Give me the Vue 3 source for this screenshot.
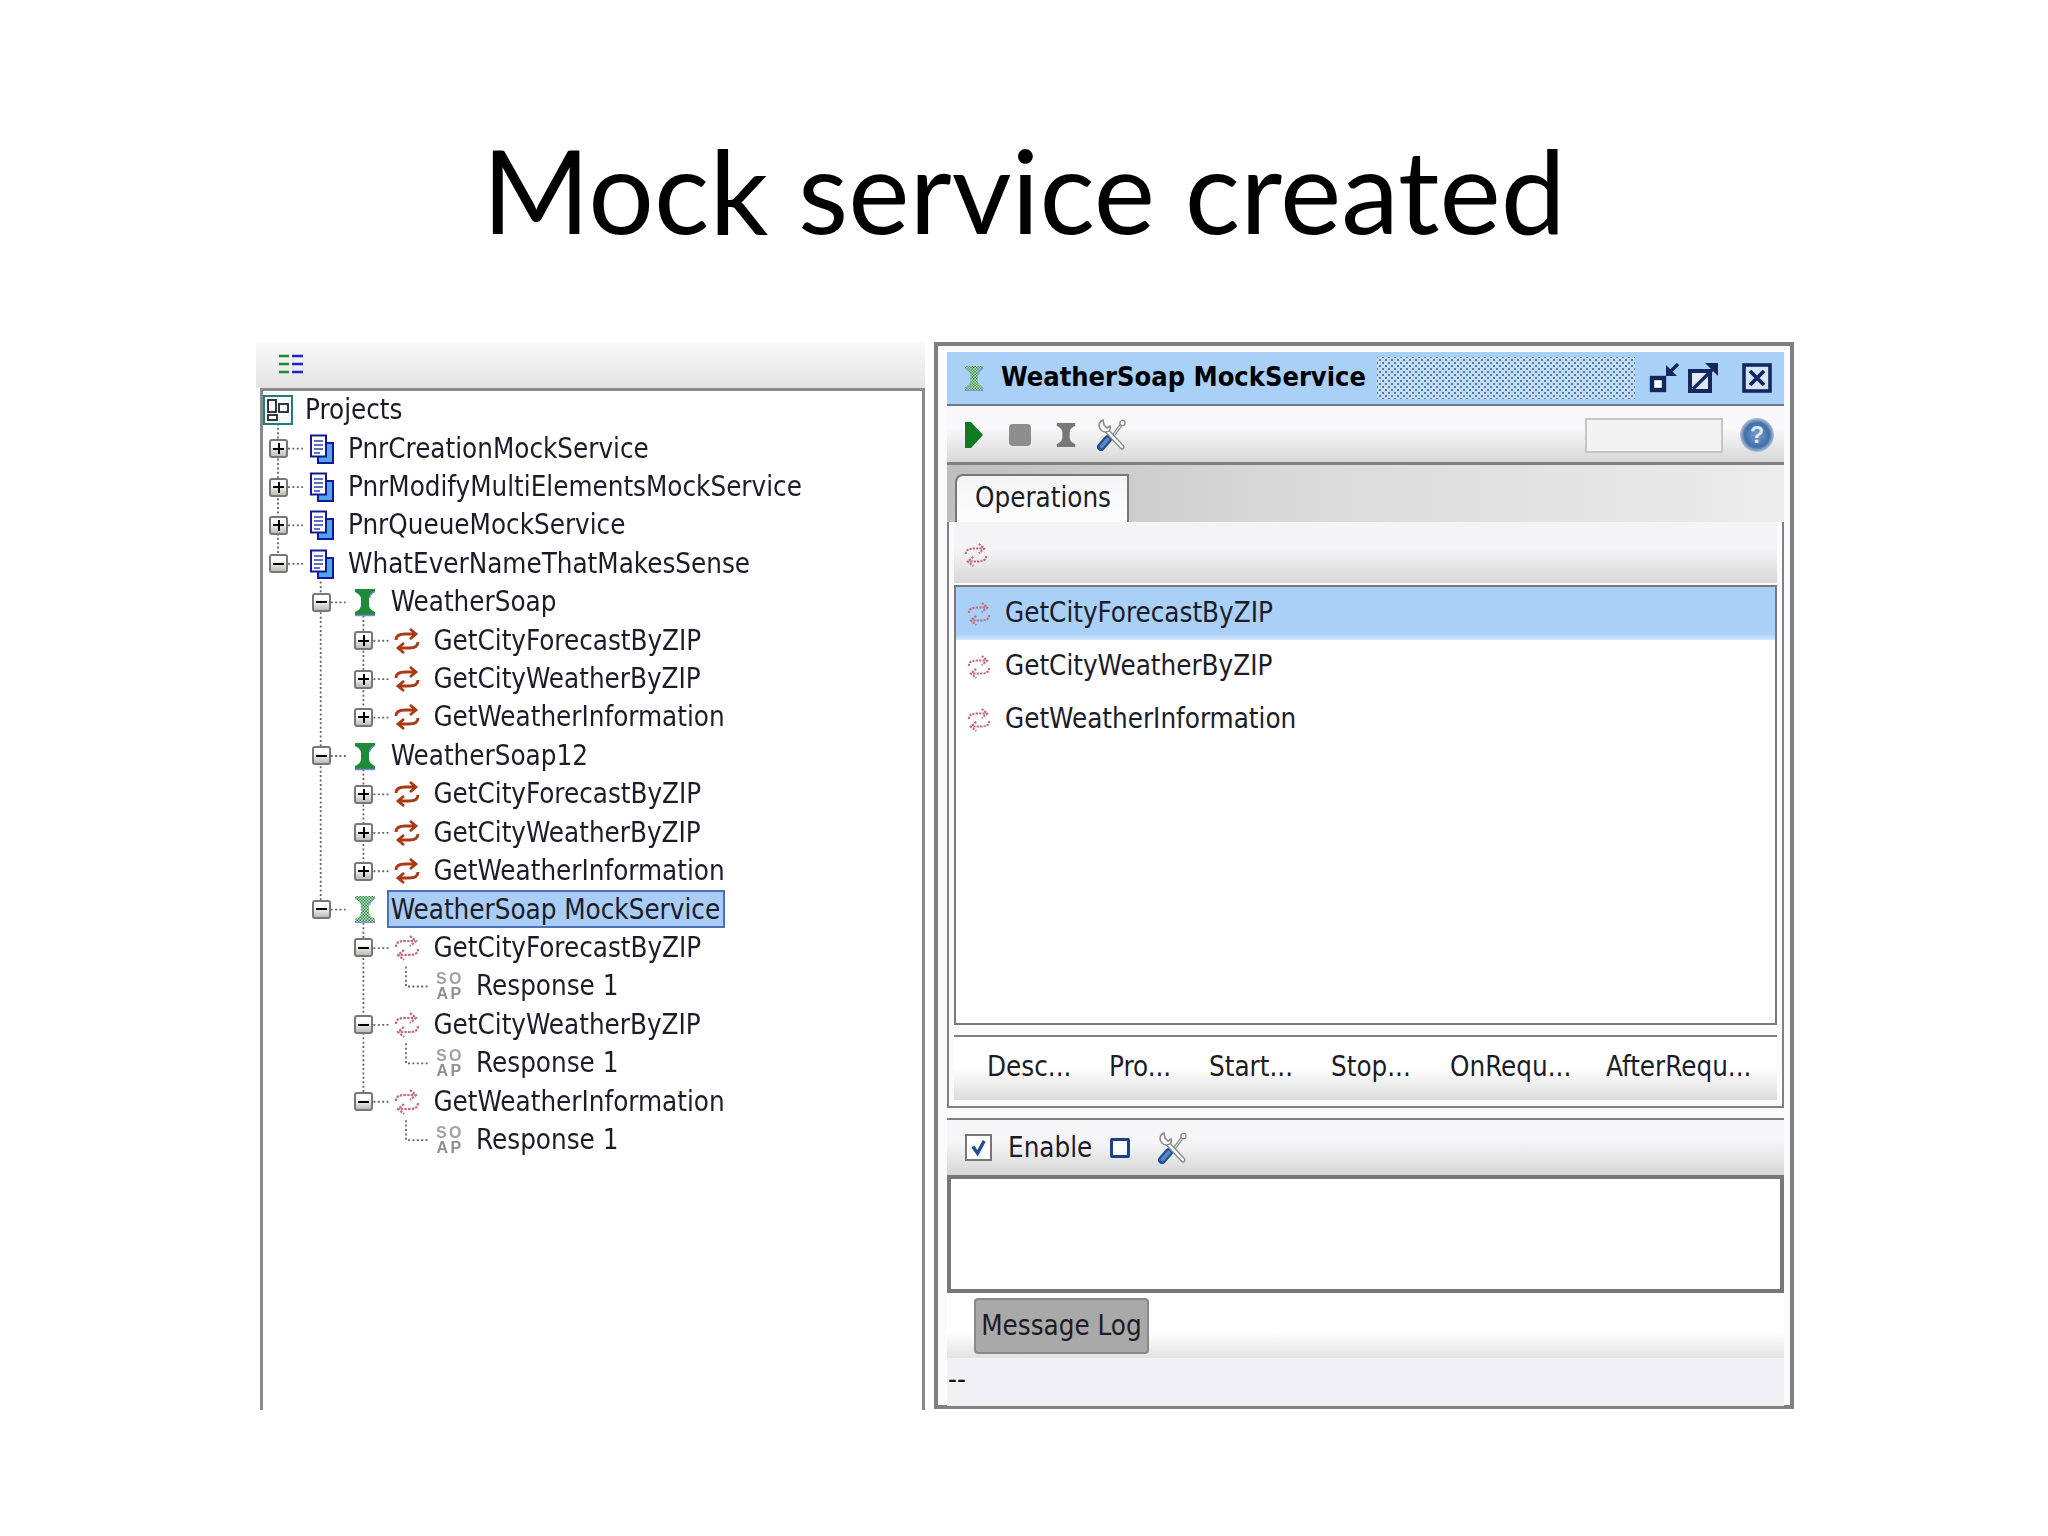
<script setup>
const ROW = 38.42
const rows = [
  { label: 'Projects', icon: 'projects', depth: 0, root: true },
  { label: 'PnrCreationMockService', icon: 'doc', depth: 0, exp: 'plus' },
  { label: 'PnrModifyMultiElementsMockService', icon: 'doc', depth: 0, exp: 'plus' },
  { label: 'PnrQueueMockService', icon: 'doc', depth: 0, exp: 'plus' },
  { label: 'WhatEverNameThatMakesSense', icon: 'doc', depth: 0, exp: 'minus' },
  { label: 'WeatherSoap', icon: 'glass', depth: 1, exp: 'minus' },
  { label: 'GetCityForecastByZIP', icon: 'op', depth: 2, exp: 'plus' },
  { label: 'GetCityWeatherByZIP', icon: 'op', depth: 2, exp: 'plus' },
  { label: 'GetWeatherInformation', icon: 'op', depth: 2, exp: 'plus' },
  { label: 'WeatherSoap12', icon: 'glass', depth: 1, exp: 'minus' },
  { label: 'GetCityForecastByZIP', icon: 'op', depth: 2, exp: 'plus' },
  { label: 'GetCityWeatherByZIP', icon: 'op', depth: 2, exp: 'plus' },
  { label: 'GetWeatherInformation', icon: 'op', depth: 2, exp: 'plus' },
  { label: 'WeatherSoap MockService', icon: 'glass-mock', depth: 1, exp: 'minus', selected: true },
  { label: 'GetCityForecastByZIP', icon: 'op-mock', depth: 2, exp: 'minus' },
  { label: 'Response 1', icon: 'soap', depth: 3 },
  { label: 'GetCityWeatherByZIP', icon: 'op-mock', depth: 2, exp: 'minus' },
  { label: 'Response 1', icon: 'soap', depth: 3 },
  { label: 'GetWeatherInformation', icon: 'op-mock', depth: 2, exp: 'minus' },
  { label: 'Response 1', icon: 'soap', depth: 3 }
]
const cy = (i) => ROW * i + ROW / 2
const cx = (d) => 15 + 42.7 * d
const lines = []
const v = (d, a, b) => lines.push(`M${cx(d)} ${cy(a)}V${cy(b)}`)
v(0, 0, 4); v(1, 4, 13); v(2, 5, 8); v(2, 9, 12); v(2, 13, 18)
rows.forEach((r, i) => {
  if (r.exp) lines.push(`M${cx(r.depth) + 10} ${cy(i)}H${cx(r.depth) + 25}`)
  if (r.icon === 'soap') lines.push(`M143 ${cy(i) - 20}V${cy(i)}H167`)
})
const linePath = lines.join('')
const ops = ['GetCityForecastByZIP', 'GetCityWeatherByZIP', 'GetWeatherInformation']
const tabs = [
  { t: 'Desc...', w: 122 }, { t: 'Pro...', w: 100 }, { t: 'Start...', w: 122 },
  { t: 'Stop...', w: 119 }, { t: 'OnRequ...', w: 156 }, { t: 'AfterRequ...', w: 160 }
]
</script>

<template>
  <div class="slide">
    <svg class="defs" aria-hidden="true">
      <defs>
        <pattern id="dither" width="3" height="3" patternUnits="userSpaceOnUse">
          <rect width="3" height="3" fill="#dfeedd" />
          <rect width="1.5" height="1.5" fill="#1a8033" />
          <rect x="1.5" y="1.5" width="1.5" height="1.5" fill="#1a8033" />
        </pattern>
        <radialGradient id="helpfill" cx=".5" cy=".5" r=".5">
          <stop offset="0" stop-color="#7aa0cf" />
          <stop offset=".72" stop-color="#3f6fa8" />
          <stop offset="1" stop-color="#b4c2d4" />
        </radialGradient>
        <symbol id="projects" viewBox="0 0 30 30">
          <rect x="1" y="1" width="28" height="28" fill="#f4fbfa" stroke="#1f7f78" stroke-width="2" />
          <rect x="5" y="5" width="8" height="12" fill="none" stroke="#222" stroke-width="1.8" />
          <rect x="16" y="9" width="9" height="8" fill="none" stroke="#222" stroke-width="1.8" />
          <rect x="5" y="20" width="9" height="5" fill="none" stroke="#222" stroke-width="1.8" />
        </symbol>
        <symbol id="doc" viewBox="0 0 26 30">
          <rect x="9" y="9" width="15" height="20" fill="#4fa6e8" stroke="#16169a" stroke-width="2" />
          <rect x="2" y="1.5" width="15" height="21" fill="#fff" stroke="#16169a" stroke-width="2" />
          <path d="M5 7H14M5 11H14M5 15H14M5 19H11" stroke="#2f3fb8" stroke-width="1.7" fill="none" />
        </symbol>
        <symbol id="glass" viewBox="0 0 26 30">
          <path d="M3 2H23V5C19 7 17 9 17 12V18C17 21 19 23 23 25V28H3V25C7 23 9 21 9 18V12C9 9 7 7 3 5Z" fill="#1f8a3a" />
          <path d="M3 28.4H23M23 4C20 6 18 8 17.5 11" stroke="#7d8ad6" stroke-width="1.5" fill="none" />
        </symbol>
        <symbol id="glass-mock" viewBox="0 0 26 30">
          <path d="M3 2H23V5C19 7 17 9 17 12V18C17 21 19 23 23 25V28H3V25C7 23 9 21 9 18V12C9 9 7 7 3 5Z" fill="url(#dither)" />
          <path d="M3 28.4H23M23 4C20 6 18 8 17.5 11" stroke="#8c8fe0" stroke-width="1.4" fill="none" />
        </symbol>
        <symbol id="glass-grey" viewBox="0 0 26 30">
          <path d="M3 2H23V5C19 7 17 9 17 12V18C17 21 19 23 23 25V28H3V25C7 23 9 21 9 18V12C9 9 7 7 3 5Z" fill="#777" />
        </symbol>
        <symbol id="op" viewBox="0 0 26 30">
          <path d="M2 14C2 9 6 8 11 8H21M16 3L22 8L16 13" fill="none" stroke="#a93a16" stroke-width="2.8" />
          <path d="M24 16C24 21 20 22 15 22H5M10 17L4 22L10 27" fill="none" stroke="#a93a16" stroke-width="2.8" />
        </symbol>
        <symbol id="op-mock" viewBox="0 0 26 30">
          <path d="M2 14C2 9 6 8 11 8H21M16 3L22 8L16 13" fill="none" stroke="#c06a7c" stroke-width="2.2" stroke-dasharray="2.4 1.2" />
          <path d="M24 16C24 21 20 22 15 22H5M10 17L4 22L10 27" fill="none" stroke="#c06a7c" stroke-width="2.2" stroke-dasharray="2.4 1.2" />
        </symbol>
        <symbol id="soap" viewBox="0 0 26 30">
          <text x="13" y="13" text-anchor="middle" font-family="Liberation Sans, sans-serif" font-weight="700" font-size="16" letter-spacing="2.5" fill="#a2a2a2">SO</text>
          <text x="13" y="28" text-anchor="middle" font-family="Liberation Sans, sans-serif" font-weight="700" font-size="16" letter-spacing="2.5" fill="#8f8f8f">AP</text>
        </symbol>
        <symbol id="tools" viewBox="0 0 32 32">
          <path d="M26 6L15 21" stroke="#8b8b8b" stroke-width="3.4" />
          <path d="M26 6L15 21" stroke="#e6e6e6" stroke-width="1.2" />
          <circle cx="27.5" cy="4" r="2.6" fill="#fff" stroke="#8b8b8b" stroke-width="1.4" />
          <path d="M6 28L13 20" stroke="#1f4f96" stroke-width="8" stroke-linecap="round" />
          <path d="M6.5 27.5L12.5 20.5" stroke="#5c86bd" stroke-width="4" stroke-linecap="round" />
          <path d="M12 12L27 28" stroke="#8b8b8b" stroke-width="5.2" stroke-linecap="round" />
          <path d="M12 12L27 28" stroke="#fff" stroke-width="2.4" stroke-linecap="round" />
          <path d="M8 1C3.500 2.500 3 8 6 11C8.500 13.500 12 13.500 14.500 11.500C15.500 10 15.500 8.500 15 7L12 9L9 6Z" fill="#fff" stroke="#8b8b8b" stroke-width="1.6" />
        </symbol>
      </defs>
    </svg>

    <h1 class="title">Mock service created</h1>

    <div class="panels">
      <section class="left">
        <div class="left-bar">
          <svg class="list-ic" viewBox="0 0 24 20">
            <path d="M0 2H10M0 10H10M0 18H10" stroke="#1f8a2a" stroke-width="2.4" />
            <path d="M13 2H24M13 10H24M13 18H24" stroke="#2222cc" stroke-width="2.4" />
          </svg>
        </div>
        <div class="tree">
          <svg class="tree-lines" width="660" height="800"><path :d="linePath" fill="none" stroke="#666" stroke-width="1.8" stroke-dasharray="2 2.4" /></svg>
          <div v-for="(r, i) in rows" :key="i" class="row" :class="['d' + r.depth, { root: r.root }]">
            <span v-if="!r.root" class="exp" :class="{ none: !r.exp }">
              <i v-if="r.exp" class="bar"></i>
              <i v-if="r.exp === 'plus'" class="bar vert"></i>
            </span>
            <svg class="ic" :class="{ big: r.root }"><use :href="'#' + r.icon" /></svg>
            <span class="lab" :class="{ sel: r.selected }">{{ r.label }}</span>
          </div>
        </div>
      </section>

      <section class="right">
        <header class="head">
          <svg class="ic head-ic"><use href="#glass-mock" /></svg>
          <span class="head-title">WeatherSoap MockService</span>
          <span class="dots"></span>
          <svg class="win win-a" viewBox="0 0 30 30">
            <rect x="3" y="15" width="12" height="12" fill="#fff" stroke="#14285f" stroke-width="4.4" />
            <path d="M17 2V13H28Z" fill="#14285f" />
            <path d="M20 10L29 1" stroke="#14285f" stroke-width="3.4" />
          </svg>
          <svg class="win win-b" viewBox="0 0 32 30">
            <rect x="3" y="8" width="20" height="20" fill="#dfe7f3" stroke="#14285f" stroke-width="4" />
            <path d="M31 0H18L31 13Z" fill="#14285f" />
            <path d="M6 26L26 6" stroke="#14285f" stroke-width="3.2" />
          </svg>
          <svg class="win win-c" viewBox="0 0 30 30">
            <rect x="2" y="2" width="26" height="26" fill="#d6e6fa" stroke="#14285f" stroke-width="3.6" />
            <path d="M8 8L22 22M22 8L8 22" stroke="#14285f" stroke-width="3.8" />
          </svg>
        </header>

        <div class="tool">
          <svg class="t-play" viewBox="0 0 20 28"><path d="M1 1H7L19 14L7 27H1Z" fill="#0f7a1f" /></svg>
          <span class="t-stop"></span>
          <svg class="ic t-glass"><use href="#glass-grey" /></svg>
          <svg class="t-tools"><use href="#tools" /></svg>
          <span class="search"></span>
          <svg class="help" viewBox="0 0 36 36">
            <circle cx="18" cy="18" r="17" fill="url(#helpfill)" />
            <text x="18" y="26" text-anchor="middle" font-family="Liberation Sans, sans-serif" font-weight="700" font-size="23" fill="#dfe9f6">?</text>
          </svg>
        </div>

        <div class="tabstrip">
          <span class="tab">Operations</span>
        </div>

        <div class="box">
          <div class="sub">
            <svg class="ic op-sm"><use href="#op-mock" /></svg>
          </div>
          <ul class="oplist">
            <li v-for="(o, i) in ops" :key="o" class="op-row" :class="{ on: i === 0 }">
              <svg class="ic op-sm"><use href="#op-mock" /></svg>
              <span class="op-name">{{ o }}</span>
            </li>
          </ul>
          <div class="btabs">
            <span v-for="t in tabs" :key="t.t" class="btab" :style="{ width: t.w + 'px' }">{{ t.t }}</span>
          </div>
        </div>

        <div class="enable">
          <span class="check">
            <svg viewBox="0 0 20 20"><path d="M4 9L9 16L16 3" fill="none" stroke="#24508f" stroke-width="3.6" /></svg>
          </span>
          <span class="en-lab">Enable</span>
          <span class="sq"></span>
          <svg class="t-tools en-tools"><use href="#tools" /></svg>
        </div>

        <div class="logbox"></div>

        <div class="logtabs">
          <span class="logbtn">Message Log</span>
        </div>

        <div class="status">--</div>
      </section>
    </div>
  </div>
</template>

<style scoped>
.defs { position: absolute; width: 0; height: 0; }
.slide {
  width: 2048px;
  height: 1536px;
  background: #fff;
  overflow: hidden;
  color: #1c1c28;
  font-family: "DejaVu Sans Condensed", "DejaVu Sans", sans-serif;
  font-stretch: condensed;
  font-size: 27.5px;
}
.title {
  margin: 0;
  height: 342px;
  box-sizing: border-box;
  padding-top: 125px;
  font-family: Lato, sans-serif;
  font-stretch: normal;
  font-weight: 400;
  font-size: 116px;
  line-height: 130px;
  color: #000;
  text-align: center;
}
.panels {
  display: flex;
  gap: 9px;
  padding-left: 256px;
  height: 1068px;
  filter: blur(0.45px);
}
.left {
  width: 669px;
  display: flex;
  flex-direction: column;
}
.left-bar {
  height: 46px;
  flex: none;
  padding: 12px 0 0 23px;
  box-sizing: border-box;
  background: linear-gradient(#f9f9f9, #e3e3e3);
}
.list-ic { display: block; width: 24px; height: 20px; }
.tree {
  position: relative;
  flex: 1;
  margin-left: 4px;
  border: 3px solid #8a8a8a;
  border-bottom: 0;
  background: #fff;
}
.tree-lines { position: absolute; left: 0; top: 0; }
.row {
  position: relative;
  display: flex;
  align-items: center;
  height: 38.42px;
  white-space: nowrap;
}
.d0 { padding-left: 6px; }
.d1 { padding-left: 48.7px; }
.d2 { padding-left: 91.4px; }
.d3 { padding-left: 134.1px; }
.root { padding-left: 0; }
.exp {
  position: relative;
  flex: none;
  width: 19px;
  height: 19px;
  box-sizing: border-box;
  margin-right: 21px;
  border: 2px solid #777;
  border-radius: 3px;
  background: linear-gradient(#fff 30%, #bdbdb6);
}
.exp.none { visibility: hidden; }
.bar { position: absolute; left: 2px; top: 6.5px; width: 11px; height: 2px; background: #000; }
.bar.vert { left: 6.5px; top: 2px; width: 2px; height: 11px; }
.ic { flex: none; width: 26px; height: 30px; margin-right: 13px; }
.ic.big { width: 30px; margin-right: 12px; }
.lab { position: relative; top: -1px; }
.lab.sel {
  top: 0;
  margin: 0 0 0 -4px;
  padding: 0 3px 0 2px;
  height: 38px;
  line-height: 34px;
  box-sizing: border-box;
  background: #a9cdf6;
  border: 2px solid #4a72b5;
}

.right {
  width: 860px;
  height: 1067px;
  box-sizing: border-box;
  border: 4px solid #808080;
  padding: 6px 6px 0 9px;
  display: flex;
  flex-direction: column;
  background: #fbfbfd;
}
.head {
  height: 54px;
  flex: none;
  display: flex;
  align-items: center;
  box-sizing: border-box;
  background: #a9d0f6;
  border-bottom: 2px solid #6b7b8c;
  padding-left: 15px;
}
.head-ic { width: 24px; margin-right: 15px; }
.head-title {
  position: relative;
  top: -2px;
  font-weight: 700;
  color: #000;
  font-size: 27px;
  width: 376px;
  white-space: nowrap;
}
.dots {
  width: 258px;
  height: 42px;
  background-image: radial-gradient(circle, #4a7fb6 1px, transparent 1.2px), radial-gradient(circle, #4a7fb6 1px, transparent 1.2px);
  background-size: 6px 6px;
  background-position: 0 0, 3px 3px;
  background-color: #c4dcf6;
}
.win { flex: none; height: 30px; }
.win-a { width: 30px; margin-left: 14px; }
.win-b { width: 32px; margin-left: 8px; }
.win-c { width: 30px; margin-left: 23px; }
.tool {
  height: 59px;
  flex: none;
  display: flex;
  align-items: center;
  box-sizing: border-box;
  border-bottom: 3px solid #808080;
  background: linear-gradient(#f8f8fa 40%, #d8d8d8);
  padding: 2px 0 0 17px;
}
.t-play { width: 20px; height: 28px; flex: none; }
.t-stop { width: 22px; height: 22px; margin-left: 25px; border-radius: 4px; background: #8e8e8e; flex: none; }
.t-glass { margin: 0 0 0 23px; width: 24px; }
.t-tools { width: 32px; height: 32px; margin-left: 17px; flex: none; }
.search {
  width: 138px;
  height: 35px;
  box-sizing: border-box;
  margin-left: 458px;
  border: 2px solid #c6c6c6;
  background: #f3f3f3;
  flex: none;
}
.help { width: 36px; height: 36px; margin-left: 16px; flex: none; }
.tabstrip {
  height: 57px;
  flex: none;
  box-sizing: border-box;
  padding: 9px 0 0 8px;
  background: linear-gradient(90deg, #bfbfbf, #d9d9d9 40%, #ececec);
}
.tab {
  display: block;
  width: 174px;
  height: 48px;
  box-sizing: border-box;
  border: 2px solid #777;
  border-bottom: 0;
  border-radius: 8px 0 0 0;
  background: linear-gradient(#f4f4f6, #fdfdfd);
  padding-left: 18px;
  line-height: 42px;
  white-space: nowrap;
}
.box {
  height: 586px;
  flex: none;
  box-sizing: border-box;
  border: 2px solid #808080;
  border-top: 0;
  padding: 0 5px;
  display: flex;
  flex-direction: column;
}
.sub {
  height: 61px;
  flex: none;
  box-sizing: border-box;
  display: flex;
  align-items: center;
  padding: 4px 0 0 10px;
  background: linear-gradient(#f4f4f6 45%, #d8d8d8);
}
.op-sm { width: 24px; margin-right: 14px; }
.oplist {
  list-style: none;
  margin: 2px 0 0;
  padding: 0;
  height: 440px;
  flex: none;
  box-sizing: border-box;
  border: 2px solid #7a7a7a;
  background: #fff;
}
.op-row {
  height: 53.3px;
  display: flex;
  align-items: center;
  padding-left: 11px;
}
.op-name { position: relative; top: -2px; }
.op-row.on { background: linear-gradient(#a9d0f6 88%, #d2e6fb); }
.btabs {
  margin-top: 10px;
  height: 65px;
  flex: none;
  box-sizing: border-box;
  border-top: 2px solid #808080;
  display: flex;
  padding: 9px 0 0 33px;
  background: linear-gradient(#fff 50%, #dcdcdc);
}
.btab { flex: none; height: 44px; line-height: 40px; white-space: nowrap; }
.enable {
  margin-top: 10px;
  height: 57px;
  flex: none;
  display: flex;
  align-items: center;
  box-sizing: border-box;
  border-top: 2px solid #808080;
  padding-left: 18px;
  background: linear-gradient(#f6f6f8 40%, #d6d6d6);
}
.check {
  width: 27px;
  height: 27px;
  box-sizing: border-box;
  border: 2px solid #777;
  background: #fff;
  padding: 2px;
  flex: none;
}
.check svg { display: block; width: 19px; height: 19px; }
.en-lab { position: relative; top: -1px; margin-left: 16px; width: 102px; flex: none; }
.sq {
  width: 20px;
  height: 20px;
  box-sizing: border-box;
  border: 3px solid #1f3f86;
  border-radius: 2px;
  background: #fff;
  flex: none;
}
.en-tools { margin-left: 26px; }
.logbox {
  height: 118px;
  flex: none;
  box-sizing: border-box;
  border: 4px solid #777;
  background: #fff;
}
.logtabs {
  height: 65px;
  flex: none;
  box-sizing: border-box;
  padding: 5px 0 0 27px;
  background: linear-gradient(#fff 60%, #e2e2e2);
}
.logbtn {
  display: block;
  width: 175px;
  height: 56px;
  box-sizing: border-box;
  border: 2px solid #8a8a8a;
  border-radius: 4px;
  background: #a9a9a9;
  text-align: center;
  line-height: 50px;
  white-space: nowrap;
}
.status {
  height: 48px;
  flex: none;
  background: #f1f1f5;
  line-height: 42px;
  color: #111;
  padding-left: 1px;
}
</style>
